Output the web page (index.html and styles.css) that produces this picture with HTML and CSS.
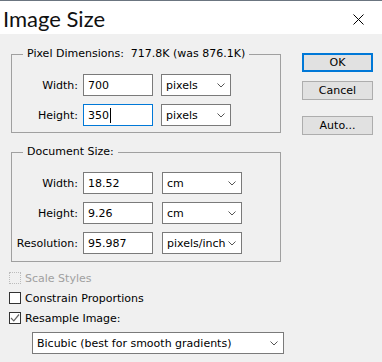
FILE: index.html
```html
<!DOCTYPE html>
<html lang="en">
<head>
    <meta charset="UTF-8">
    <meta name="viewport" content="width=device-width, initial-scale=1.0">
    <title>Image Size</title>
    <link rel="stylesheet" href="styles.css">
</head>
<body>
    <div class="window">
        <header class="titlebar">
            <span class="title">Image Size</span>
            <span class="close">
                <svg width="11" height="11" viewBox="0 0 11 11"><path d="M0.5 0.5 L10.5 10.5 M10.5 0.5 L0.5 10.5" stroke="#000" stroke-width="1" fill="none"/></svg>
            </span>
        </header>

        <div class="dialog">
            <div class="main">
                <fieldset class="group">
                    <legend>Pixel Dimensions:&nbsp; 717.8K (was 876.1K)</legend>
                    <div class="row">
                        <label class="label">Width:</label>
                        <div class="field">700</div>
                        <div class="dropdown">pixels<span class="arrow"><svg width="8" height="5" viewBox="0 0 8 5"><path d="M0.5 0.5 L4 4 L7.5 0.5" stroke="#555" fill="none"/></svg></span></div>
                    </div>
                    <div class="row">
                        <label class="label">Height:</label>
                        <div class="field focused">350<span class="caret"></span></div>
                        <div class="dropdown">pixels<span class="arrow"><svg width="8" height="5" viewBox="0 0 8 5"><path d="M0.5 0.5 L4 4 L7.5 0.5" stroke="#555" fill="none"/></svg></span></div>
                    </div>
                </fieldset>

                <fieldset class="group doc">
                    <legend>Document Size:</legend>
                    <div class="row">
                        <label class="label">Width:</label>
                        <div class="field">18.52</div>
                        <div class="dropdown wide">cm<span class="arrow"><svg width="8" height="5" viewBox="0 0 8 5"><path d="M0.5 0.5 L4 4 L7.5 0.5" stroke="#555" fill="none"/></svg></span></div>
                    </div>
                    <div class="row">
                        <label class="label">Height:</label>
                        <div class="field">9.26</div>
                        <div class="dropdown wide">cm<span class="arrow"><svg width="8" height="5" viewBox="0 0 8 5"><path d="M0.5 0.5 L4 4 L7.5 0.5" stroke="#555" fill="none"/></svg></span></div>
                    </div>
                    <div class="row">
                        <label class="label">Resolution:</label>
                        <div class="field">95.987</div>
                        <div class="dropdown wide">pixels/inch<span class="arrow"><svg width="8" height="5" viewBox="0 0 8 5"><path d="M0.5 0.5 L4 4 L7.5 0.5" stroke="#555" fill="none"/></svg></span></div>
                    </div>
                </fieldset>

                <div class="checks">
                    <div class="check disabled"><span class="box"></span>Scale Styles</div>
                    <div class="check"><span class="box"></span>Constrain Proportions</div>
                    <div class="check"><span class="box"><svg width="10" height="10" viewBox="0 0 10 10"><path d="M1 5 L3.8 7.8 L9 1.5" stroke="#666" stroke-width="1.2" fill="none"/></svg></span>Resample Image:</div>
                </div>

                <div class="dropdown method">Bicubic (best for smooth gradients)<span class="arrow"><svg width="8" height="5" viewBox="0 0 8 5"><path d="M0.5 0.5 L4 4 L7.5 0.5" stroke="#555" fill="none"/></svg></span></div>
            </div>

            <div class="buttons">
                <button class="btn default">OK</button>
                <button class="btn">Cancel</button>
                <button class="btn auto">Auto...</button>
            </div>
        </div>
    </div>
</body>
</html>
```

FILE: styles.css
```css
* {
    margin: 0;
    padding: 0;
    box-sizing: border-box;
}

body {
    background-color: #f0f0f0;
    color: #000;
    font-family: 'DejaVu Sans', Tahoma, sans-serif;
    font-size: 11px;
}

.window {
    width: 382px;
    height: 362px;
    border-top: 1px solid #6b7580;
}

.titlebar {
    height: 33px;
    background-color: #fff;
    display: flex;
    align-items: center;
    justify-content: space-between;
}

.title {
    font-family: Lato, 'Noto Sans', sans-serif;
    font-size: 22px;
    font-weight: 400;
    color: #111;
    padding-left: 3px;
    padding-top: 1px;
}

.close {
    display: flex;
    margin-right: 18px;
    margin-top: 3px;
}

.dialog {
    display: flex;
    gap: 19px;
    padding-top: 13px;
    padding-left: 9px;
}

.main {
    width: 274px;
}

.group {
    margin-left: 2px;
    width: 270px;
    border: 1px solid #a0a0a0;
    padding: 13px 0 6px 0;
}

.group legend {
    margin-left: 11px;
    padding: 0 4px;
    line-height: 14px;
}

.group.doc {
    margin-top: 12px;
    padding-bottom: 7px;
}

.row {
    display: flex;
    align-items: center;
    gap: 5px;
    height: 22px;
}

.row + .row {
    margin-top: 8px;
}

.label {
    width: 66px;
    text-align: right;
}

.field {
    width: 70px;
    height: 22px;
    background-color: #fff;
    border: 1px solid #7a7a7a;
    padding-left: 4px;
    display: flex;
    align-items: center;
    margin-right: 3px;
}

.field.focused {
    border-color: #0078d7;
}

.caret {
    display: inline-block;
    width: 1px;
    height: 15px;
    background-color: #000;
    margin-left: 1px;
}

.dropdown {
    width: 70px;
    height: 22px;
    background-color: #fff;
    border: 1px solid #7a7a7a;
    padding-left: 4px;
    display: flex;
    align-items: center;
    justify-content: space-between;
}

.dropdown.wide {
    width: 80px;
    margin-left: 1px;
}

.arrow {
    display: flex;
    margin-right: 5px;
}

.checks {
    margin-top: 6px;
}

.check {
    display: flex;
    align-items: center;
    height: 20px;
}

.check .box {
    width: 12px;
    height: 12px;
    border: 1px solid #333;
    background-color: #fff;
    margin-right: 4px;
    display: flex;
    align-items: center;
    justify-content: center;
}

.check.disabled {
    color: #a0a0a0;
}

.check.disabled .box {
    border: 1px dotted #bcbcbc;
    background-color: #f0f0f0;
}

.dropdown.method {
    width: 252px;
    margin-left: 23px;
    margin-top: 4px;
}

.buttons {
    display: flex;
    flex-direction: column;
    padding-top: 6px;
}

.btn {
    width: 71px;
    height: 19px;
    background-color: #e1e1e1;
    border: 1px solid #adadad;
    font-family: 'DejaVu Sans', Tahoma, sans-serif;
    font-size: 11px;
    color: #000;
}

.btn.default {
    border: 2px solid #0078d7;
}

.btn + .btn {
    margin-top: 9px;
}

.btn.auto {
    margin-top: 16px;
}
```
